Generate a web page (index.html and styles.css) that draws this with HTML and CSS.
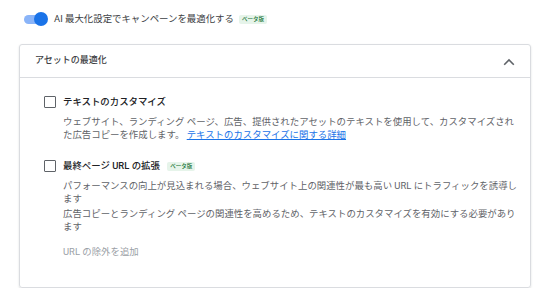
FILE: index.html
```html
<!DOCTYPE html>
<html lang="ja">
<head>
<meta charset="utf-8">
<link rel="stylesheet" href="styles.css">
</head>
<body>
<div class="page">
  <div class="toggle-row">
    <span class="toggle"><span class="track"></span><span class="knob"></span></span>
    <span class="toggle-label">AI 最大化設定でキャンペーンを最適化する</span>
    <span class="badge">ベータ版</span>
  </div>

  <div class="card">
    <div class="card-header">
      <span class="card-title">アセットの最適化</span>
      <svg class="chevron" width="12" height="8" viewBox="0 0 12 8"><path d="M1.2 6.8 L6 2 L10.8 6.8" fill="none" stroke="#5f6368" stroke-width="1.6"/></svg>
    </div>
    <div class="card-body">
      <div class="option">
        <span class="checkbox"></span>
        <div class="option-content">
          <div class="option-title">テキストのカスタマイズ</div>
          <p class="desc desc-a">ウェブサイト、ランディング ページ、広告、提供されたアセットのテキストを使用して、カスタマイズされた広告コピーを作成します。 <a class="link" href="#">テキストのカスタマイズに関する詳細</a></p>
        </div>
      </div>
      <div class="option option-2">
        <span class="checkbox"></span>
        <div class="option-content">
          <div class="option-title">最終ページ URL の拡張 <span class="badge">ベータ版</span></div>
          <p class="desc desc-b">パフォーマンスの向上が見込まれる場合、ウェブサイト上の関連性が最も高い URL にトラフィックを誘導します</p>
          <p class="desc desc-b desc-gap">広告コピーとランディング ページの関連性を高めるため、テキストのカスタマイズを有効にする必要があります</p>
          <div class="add-url">URL の除外を追加</div>
        </div>
      </div>
    </div>
  </div>
</div>
</body>
</html>
```

FILE: styles.css
```css
* { box-sizing: border-box; }
html, body { margin: 0; padding: 0; background: #fff; }
body {
  font-family: Roboto, "Noto Sans CJK JP", sans-serif;
  font-size: 9.42px;
  line-height: 13.2px;
  color: #3c4043;
}
.page { padding: 12px 18px 0 19px; width: 548px; }

.toggle-row {
  display: flex;
  align-items: center;
  height: 14px;
  padding-left: 5px;
}
.toggle { position: relative; width: 23px; height: 14px; display: inline-block; }
.toggle .track {
  position: absolute; left: 0; top: 3px; width: 21px; height: 9px;
  border-radius: 5px; background: #8ab4f8;
}
.toggle .knob {
  position: absolute; left: 10px; top: 0; width: 14px; height: 14px;
  border-radius: 50%; background: #1a73e8;
}
.toggle-label { margin-left: 7px; color: #3c4043; }
.badge {
  display: inline-block;
  margin-left: 5px;
  font-size: 5.5px;
  line-height: 9px;
  height: 9px;
  padding: 0 3px;
  background: #e6f4ea;
  color: #137333;
  border-radius: 2px;
  vertical-align: middle;
  font-weight: 500;
}

.card {
  margin-top: 18px;
  border: 1px solid #dadce0;
  border-radius: 3px;
  box-shadow: 0 1px 2px rgba(60,64,67,.18);
  width: 512px;
}
.card-header {
  height: 33px;
  display: flex;
  align-items: center;
  justify-content: space-between;
  padding: 0 15px 0 15px;
  border-bottom: 1px solid #dadce0;
}
.card-title { font-size: 9px; font-weight: 500; color: #3c4043; }
.chevron { display: block; margin-top: 1px; }

.card-body { padding: 17px 0 29px 24px; }
.option { display: flex; align-items: flex-start; }
.option-2 { margin-top: 17px; }
.checkbox {
  flex: none;
  width: 12px; height: 12px;
  border: 1.5px solid #5f6368;
  border-radius: 1px;
  margin-top: 1px;
}
.option-content { margin-left: 7px; }
.option-title { font-weight: 500; color: #202124; }
.option-title .badge { margin-left: 5px; vertical-align: 1px; }
.desc { margin: 7px 0 0 0; color: #5f6368; }
.desc-a { width: 459px; }
.desc-b { width: 455px; }
.desc-gap { margin-top: 2px; }
.link { color: #1a73e8; text-decoration: underline; }
.add-url { margin-top: 11px; color: #9aa0a6; }
```
